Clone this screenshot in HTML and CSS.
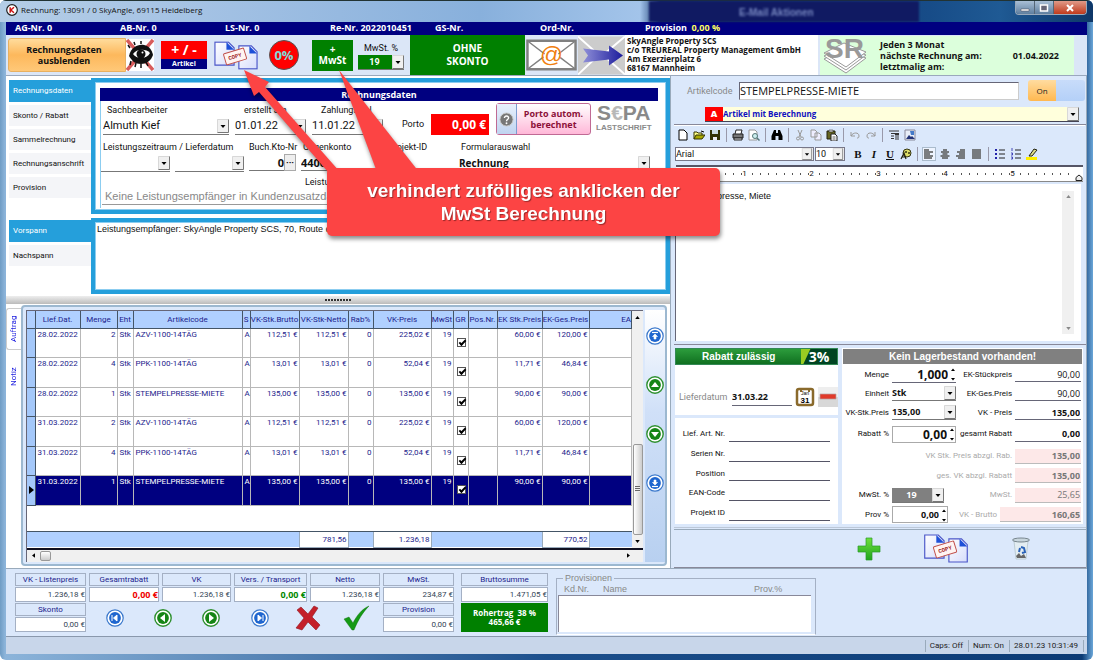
FILE: index.html
```html
<!DOCTYPE html>
<html lang="de">
<head>
<meta charset="utf-8">
<title>Rechnung: 13091 / 0 SkyAngle, 69115 Heidelberg</title>
<link rel="stylesheet" href="styles.css">
</head>
<body>
<svg class="defs" width="0" height="0" aria-hidden="true">
  <defs>
    <linearGradient id="pageFold" x1="0" y1="0" x2="1" y2="1"><stop offset="0" stop-color="#fff"/><stop offset="1" stop-color="#d5dcfb"/></linearGradient>
    <linearGradient id="plusGreen" x1="0" y1="0" x2="0" y2="1"><stop offset="0" stop-color="#6fe03c"/><stop offset="1" stop-color="#1fa41f"/></linearGradient>
    <linearGradient id="arrowBlue" x1="0" y1="0" x2="1" y2="0"><stop offset="0" stop-color="#8f8fd8"/><stop offset="1" stop-color="#1c1c9c"/></linearGradient>
    <symbol id="down" viewBox="0 0 12 14"><path d="M0 0h12v14H0z" fill="#f0f0f0"/><path d="M.5 13.500V.5h11" fill="none" stroke="#d8d8d8"/><path d="M11.500 .5v13H.5" fill="none" stroke="#777"/><path d="M3.500 6h5L6 9z"/></symbol>
    <symbol id="copy" viewBox="0 0 46 30">
      <path d="M1 1h14l6 6v18H1z" fill="url(#pageFold)" stroke="#4a55c8" stroke-width="1.200"/><path d="M13 1l8 8h-8z" fill="#1e50d8"/>
      <path d="M26 5h13l6 6v18H26z" fill="url(#pageFold)" stroke="#4a55c8" stroke-width="1.200"/><path d="M37 5l8 8h-8z" fill="#1e50d8"/>
      <g transform="rotate(-17 22 16)"><rect x="11" y="10" width="22" height="12" rx="1" fill="#fff4f2" stroke="#c0504a"/><text x="22" y="18" text-anchor="middle" font-family="Liberation Mono" font-size="6" font-weight="bold" fill="#a32a2a">COPY</text></g>
    </symbol>
    <symbol id="ringBlue" viewBox="0 0 18 18"><circle cx="9" cy="9" r="8.200" fill="#fff" stroke="#3a78cc" stroke-width="1.200"/><circle cx="9" cy="9" r="5.900" fill="#1f66cf"/></symbol>
    <symbol id="ringGreen" viewBox="0 0 18 18"><circle cx="9" cy="9" r="8.200" fill="#fff" stroke="#2f9030" stroke-width="1.400"/><circle cx="9" cy="9" r="5.900" fill="#158515"/></symbol>
    <symbol id="spin" viewBox="0 0 6 14"><path d="M1 4l2-2.500L5 4zM1 11l2 2.500L5 11z"/></symbol>
  </defs>
</svg>

<div class="window">
  <header class="titlebar">
    <svg class="app-icon" viewBox="0 0 12 12"><circle cx="6" cy="6" r="5.300" fill="#fff" stroke="#222" stroke-width="1.200"/><path d="M4.200 3.200v5.600M8 3.200L4.800 6 8 8.800" fill="none" stroke="#c11" stroke-width="1.500"/></svg>
    <h1>Rechnung: 13091 / 0 SkyAngle, 69115 Heidelberg</h1>
    <div class="behind"><span>E-Mail Aktionen</span></div>
    <div class="caption-buttons">
      <button class="cap" aria-label="Minimieren"><svg viewBox="0 0 10 8"><path d="M1 5h8v2H1z" fill="#fff" stroke="#445" stroke-width=".5"/></svg></button>
      <button class="cap" aria-label="Maximieren"><svg viewBox="0 0 10 8"><path d="M1.500 1h7v6h-7z" fill="#667" stroke="#fff" stroke-width="1.500"/></svg></button>
      <button class="cap close" aria-label="Schließen"><svg viewBox="0 0 10 8"><path d="M2 1l6 6M8 1L2 7" stroke="#fff" stroke-width="2"/></svg></button>
    </div>
  </header>

  <div class="numbers">
    <span>AG-Nr. 0</span><span>AB-Nr. 0</span><span>LS-Nr. 0</span><span>Re-Nr. 2022010451</span><span>GS-Nr.</span><span>Ord-Nr.</span><span>Provision &nbsp;<em>0,00 %</em></span>
  </div>

  <div class="toolbar">
    <button class="hide-btn">Rechnungsdaten<br>ausblenden</button>
    <button class="eye" aria-label="Ausblenden"><svg viewBox="0 0 28 32"><path d="M0 0h28v32H0z" fill="#fff"/><path d="M1 1l26 30M27 1L1 31" stroke="#d85c5c" stroke-width="3.500"/><path d="M3 17C5 8 12 5 18 6c5 1 8 5 9 10-2 6-7 9-12 9C9 25 6 22 3 17z" fill="#111"/><path d="M7 15c3-5 13-6 17-1-3 6-13 7-17 1z" fill="#fff"/><circle cx="15" cy="15" r="4.500" fill="#111"/><circle cx="16.500" cy="13.500" r="1" fill="#fff"/><path d="M5 22l-1 4M10 24l-1 4M15 25v4M20 23l2 4M4 9L2 6M9 6L8 3M15 5V2" stroke="#111" stroke-width="1.500"/></svg></button>
    <button class="plusminus"><b>+ / -</b><small>Artikel</small></button>
    <button class="copy-btn" aria-label="Kopieren"><svg viewBox="0 0 46 30"><use href="#copy"/></svg></button>
    <button class="zero">0%</button>
    <button class="vat-btn">+<br>MwSt</button>
    <div class="vat"><label for="vatTop">MwSt. %</label><span class="combo"><select id="vatTop" class="greensel"><option>19</option></select><svg><use href="#down"/></svg></span></div>
    <button class="noskonto">OHNE<br>SKONTO</button>
    <button class="mail" aria-label="E-Mail"><svg viewBox="0 0 52 32"><path d="M1.500 1.500h49v29h-49z" fill="#fff" stroke="#808080" stroke-width="2.500"/><path d="M2 2l17 13M50 2L33 15M2 30l16-12M50 30L34 18" stroke="#808080" stroke-width="1.500"/><text x="26" y="23" text-anchor="middle" font-family="Liberation Sans" font-size="23" fill="#f08010">@</text></svg></button>
    <div class="fade-mail"><svg viewBox="0 0 47 38"><path d="M0 0h47v38H0z" fill="#ccc"/><path d="M0 0l18 16M47 0L28 16M0 38l17-16M47 38L29 22" stroke="#fff" stroke-width="2"/><path d="M5 12l26 3v-6l14 10-14 10v-6L5 26l5-7z" fill="url(#arrowBlue)"/></svg></div>
    <address>SkyAngle Property SCS<br>c/o TREUREAL Property Management GmbH<br>Am Exerzierplatz 6<br>68167 Mannheim</address>
    <div class="series">
      <svg class="sr" viewBox="0 0 46 38"><path d="M2 23l20-10 22 9-20 15z" fill="#fff" stroke="#999"/><path d="M2 20l20-10 22 9-20 15z" fill="#fff" stroke="#999"/><path d="M2 17l20-10 22 9-20 15z" fill="#fff" stroke="#999"/><text x="3" y="22" font-family="Liberation Sans" font-weight="bold" font-size="28" fill="#999">SR</text></svg>
      <p>Jeden 3 Monat<br>nächste Rechnung am:<br>letztmalig am:</p>
      <time>01.04.2022</time>
    </div>
  </div>

  <main class="main">
    <section class="left">
      <div class="tabs-area">
        <nav class="side-tabs"><button class="on">Rechnungsdaten</button><button>Skonto / Rabatt</button><button>Sammelrechnung</button><button>Rechnungsanschrift</button><button>Provision</button></nav>
        <div class="bluebox form">
          <h2>Rechnungsdaten</h2>
          <div class="row r1">
            <div class="f sach"><label for="sach">Sachbearbeiter</label><span class="combo"><select id="sach"><option>Almuth Kief</option></select><svg><use href="#down"/></svg></span></div>
            <div class="f dat"><label for="erst">erstellt am</label><span class="combo"><select id="erst"><option>01.01.22</option></select><svg><use href="#down"/></svg></span></div>
            <div class="f dat"><label for="zahl">Zahlungsziel</label><span class="combo"><select id="zahl"><option>11.01.22</option></select><svg><use href="#down"/></svg></span></div>
            <label class="porto-l" for="porto">Porto</label><input id="porto" class="porto" value="0,00 €">
            <button class="porto-btn"><span class="q"><svg viewBox="0 0 16 16"><circle cx="8" cy="8" r="7" fill="#777" stroke="#ccc"/><path d="M5.800 6.400c0-3 4.600-2.800 4.400 0C10.100 8 8 8 8 9.800" fill="none" stroke="#fff" stroke-width="1.500"/><circle cx="8" cy="12" r="1" fill="#fff"/></svg></span><span>Porto autom.<br>berechnet</span></button>
            <div class="sepa"><b>S<i>€</i>PA</b><small>LASTSCHRIFT</small></div>
          </div>
          <div class="row r2">
            <div class="f leist"><label for="lz1">Leistungszeitraum / Lieferdatum</label><div class="pair"><span class="combo"><select id="lz1"><option></option></select><svg><use href="#down"/></svg></span><span class="combo"><select aria-label="Lieferdatum bis"><option></option></select><svg><use href="#down"/></svg></span></div></div>
            <div class="f kto"><label for="kto">Buch.Kto-Nr</label><div class="ktof"><input id="kto" value="0"><button>···</button></div></div>
            <div class="f geg"><label for="geg">Gegenkonto</label><input id="geg" value="4400"></div>
            <div class="f proj"><label for="proj">Projekt-ID</label><input id="proj" value=""></div>
            <div class="f formsel"><label for="formsel">Formularauswahl</label><span class="combo"><select id="formsel"><option>Rechnung</option></select><svg><use href="#down"/></svg></span></div>
          </div>
          <div class="row r3"><label for="empf">Leistungsempfänger</label><input id="empf" value="Keine Leistungsempfänger in Kundenzusatzdaten"></div>
        </div>
      </div>
      <div class="tabs-area second">
        <nav class="side-tabs"><button class="on">Vorspann</button><button>Nachspann</button></nav>
        <div class="bluebox"><textarea aria-label="Vorspann">Leistungsempfänger: SkyAngle Property SCS, 70, Route d'Esch</textarea></div>
      </div>
      <div class="splitter"><i></i></div>

      <div class="order">
        <nav class="vtabs"><button class="on">Auftrag</button><button>Notiz</button></nav>
        <div class="grid-panel">
          <div class="grid-wrap">
            <div class="grid-view">
              <table>
                <colgroup><col class="c0"><col class="c1"><col class="c2"><col class="c3"><col class="c4"><col class="c5"><col class="c6"><col class="c6"><col class="c8"><col class="c9"><col class="c10"><col class="c11"><col class="c12"><col class="c13"><col class="c14"><col></colgroup>
                <thead><tr><th></th><th>Lief.Dat.</th><th>Menge</th><th>Eht</th><th>Artikelcode</th><th>S</th><th>VK-Stk.Brutto</th><th>VK-Stk-Netto</th><th>Rab%</th><th>VK-Preis</th><th>MwSt</th><th>GR</th><th>Pos.Nr.</th><th>EK Stk.Preis</th><th>EK-Ges.Preis</th><th class="last">EA</th></tr></thead>
                <tbody>
                  <tr><th></th><td>28.02.2022</td><td class="n">2</td><td>Stk</td><td>AZV-1100-14TÄG</td><td>A</td><td class="n">112,51 €</td><td class="n">112,51 €</td><td class="n">0</td><td class="n">225,02 €</td><td class="n">19</td><td class="ck"><input type="checkbox" checked aria-label="GR"></td><td></td><td class="n">60,00 €</td><td class="n">120,00 €</td><td></td></tr>
                  <tr><th></th><td>28.02.2022</td><td class="n">4</td><td>Stk</td><td>PPK-1100-14TÄG</td><td>A</td><td class="n">13,01 €</td><td class="n">13,01 €</td><td class="n">0</td><td class="n">52,04 €</td><td class="n">19</td><td class="ck"><input type="checkbox" checked aria-label="GR"></td><td></td><td class="n">11,71 €</td><td class="n">46,84 €</td><td></td></tr>
                  <tr><th></th><td>28.02.2022</td><td class="n">1</td><td>Stk</td><td>STEMPELPRESSE-MIETE</td><td>A</td><td class="n">135,00 €</td><td class="n">135,00 €</td><td class="n">0</td><td class="n">135,00 €</td><td class="n">19</td><td class="ck"><input type="checkbox" checked aria-label="GR"></td><td></td><td class="n">90,00 €</td><td class="n">90,00 €</td><td></td></tr>
                  <tr><th></th><td>31.03.2022</td><td class="n">2</td><td>Stk</td><td>AZV-1100-14TÄG</td><td>A</td><td class="n">112,51 €</td><td class="n">112,51 €</td><td class="n">0</td><td class="n">225,02 €</td><td class="n">19</td><td class="ck"><input type="checkbox" checked aria-label="GR"></td><td></td><td class="n">60,00 €</td><td class="n">120,00 €</td><td></td></tr>
                  <tr><th></th><td>31.03.2022</td><td class="n">4</td><td>Stk</td><td>PPK-1100-14TÄG</td><td>A</td><td class="n">13,01 €</td><td class="n">13,01 €</td><td class="n">0</td><td class="n">52,04 €</td><td class="n">19</td><td class="ck"><input type="checkbox" checked aria-label="GR"></td><td></td><td class="n">11,71 €</td><td class="n">46,84 €</td><td></td></tr>
                  <tr class="sel"><th><svg viewBox="0 0 5 8"><path d="M0 0l5 4-5 4z"/></svg></th><td>31.03.2022</td><td class="n">1</td><td>Stk</td><td>STEMPELPRESSE-MIETE</td><td>A</td><td class="n">135,00 €</td><td class="n">135,00 €</td><td class="n">0</td><td class="n">135,00 €</td><td class="n">19</td><td class="ck"><input type="checkbox" checked aria-label="GR"></td><td></td><td class="n">90,00 €</td><td class="n">90,00 €</td><td></td></tr>
                </tbody>
                <tfoot>
                  <tr class="blank"><td colspan="16"></td></tr>
                  <tr class="sum"><td colspan="7"></td><td class="n box">781,56</td><td></td><td class="n box">1.236,18</td><td colspan="4"></td><td class="n box">770,52</td><td></td></tr>
                </tfoot>
              </table>
              <div class="vscroll"><svg viewBox="0 0 6 4"><path d="M0 4l3-4 3 4z"/></svg><span class="gap"></span><i></i><svg viewBox="0 0 6 4"><path d="M0 0l3 4 3-4z"/></svg></div>
            </div>
            <div class="hscroll"><svg viewBox="0 0 4 6"><path d="M4 0L0 3l4 3z"/></svg><i></i><svg class="r" viewBox="0 0 4 6"><path d="M0 0l4 3-4 3z"/></svg></div>
          </div>
          <nav class="vnav">
            <button aria-label="Erster"><svg viewBox="0 0 18 18"><use href="#ringBlue"/><path d="M6 5.500h6" stroke="#fff" stroke-width="1.200"/><path d="M9 7l2.500 2.500H10V12H8V9.500H6.500z" fill="#fff" stroke="#fff" stroke-width=".6"/></svg></button>
            <button aria-label="Zurück"><svg viewBox="0 0 18 18"><use href="#ringGreen"/><path d="M9 6l4 5H5z" fill="#fff"/></svg></button>
            <button aria-label="Weiter"><svg viewBox="0 0 18 18"><use href="#ringGreen"/><path d="M9 12L5 7h8z" fill="#fff"/></svg></button>
            <button aria-label="Letzter"><svg viewBox="0 0 18 18"><use href="#ringBlue"/><path d="M6 12.500h6" stroke="#fff" stroke-width="1.200"/><path d="M9 11l2.500-2.500H10V6H8v2.500H6.500z" fill="#fff" stroke="#fff" stroke-width=".6"/></svg></button>
          </nav>
        </div>
      </div>
    </section>

    <section class="right">
      <div class="article">
        <div class="a1"><label for="art">Artikelcode</label><input id="art" value="STEMPELPRESSE-MIETE"><button class="toggle"><b>On</b><i></i></button></div>
        <div class="a2"><b>A</b><span class="combo"><select aria-label="Artikelart"><option>Artikel mit Berechnung</option></select><svg><use href="#down"/></svg></span></div>
      </div>
      <div class="ed-bar">
        <button aria-label="Neu"><svg viewBox="0 0 12 12"><path d="M2 1h5l3 3v7H2z" fill="#fff" stroke="#000"/></svg></button>
        <button aria-label="Öffnen"><svg viewBox="0 0 12 12"><path d="M1 10V3h3l1 1h4v2" fill="#ff8" stroke="#330"/><path d="M1 10l2-4h9l-3 4z" fill="#aa0" stroke="#330"/><path d="M8 2l3 1" stroke="#000"/></svg></button>
        <button aria-label="Speichern"><svg viewBox="0 0 12 12"><path d="M1 1h10v10H1z" fill="#330"/><path d="M3 1h6v4H3z" fill="#cdd"/><path d="M4 8h4v3H4z" fill="#eee"/></svg></button>
        <span class="sep"></span>
        <button aria-label="Drucken"><svg viewBox="0 0 12 12"><path d="M3 5l1-4h6L9 5" fill="#fff" stroke="#222"/><path d="M1 5h10v4H1z" fill="#777" stroke="#222"/><path d="M2 9h8v2H2z" fill="#ddd" stroke="#222"/></svg></button>
        <button aria-label="Vorschau"><svg viewBox="0 0 12 12"><path d="M1 1h6l2 2v8H1z" fill="#fff" stroke="#999"/><circle cx="7" cy="7" r="2.500" fill="#cee" stroke="#577"/><path d="M9 9l2.500 2.500" stroke="#577" stroke-width="1.500"/></svg></button>
        <span class="sep"></span>
        <button aria-label="Suchen"><svg viewBox="0 0 12 12"><path d="M3 1h2v3h2V1h2l2.500 6v4H7.500V7h-3v4H.5V7z"/></svg></button>
        <span class="sep"></span>
        <button aria-label="Ausschneiden"><svg viewBox="0 0 12 12"><path d="M4 1l3 7M8 1L5 8" stroke="#999"/><circle cx="4" cy="9.500" r="1.500" fill="none" stroke="#999"/><circle cx="8" cy="9.500" r="1.500" fill="none" stroke="#999"/></svg></button>
        <button aria-label="Kopieren"><svg viewBox="0 0 12 12"><path d="M1 1h4l2 2v5H1zM5 4h4l2 2v5H5z" fill="#eef" stroke="#999"/></svg></button>
        <button aria-label="Einfügen"><svg viewBox="0 0 12 12"><path d="M1 2h8v8H1z" fill="#662" stroke="#221"/><path d="M3 1h4v2H3z" fill="#ccc" stroke="#222" stroke-width=".5"/><path d="M5 5h4l2 2v5H5z" fill="#fff" stroke="#222"/><path d="M6.500 8h3M6.500 10h3" stroke="#222" stroke-width=".7"/></svg></button>
        <span class="sep"></span>
        <button aria-label="Rückgängig"><svg viewBox="0 0 12 12"><path d="M2 3v4h4M2 7c2-4 8-4 8 0 0 2-1 2-2 2" fill="none" stroke="#999"/></svg></button>
        <button aria-label="Wiederholen"><svg viewBox="0 0 12 12"><path d="M10 3v4H6M10 7C8 3 2 3 2 7c0 2 1 2 2 2" fill="none" stroke="#999"/></svg></button>
        <span class="sep"></span>
        <button aria-label="Absatz"><svg viewBox="0 0 12 12"><path d="M1 2h10M3 4.500h4M3 7h3M3 9.500h3M10 4v7M8 4v7" stroke="#333"/><path d="M6.500 4h4.500v2H7z" fill="#333"/></svg></button>
        <button aria-label="Bild"><svg viewBox="0 0 12 12"><path d="M1 1h10v10H1z" fill="#e8eef8" stroke="#889"/><path d="M2 10l3-4 2 2 1-1 3 3z" fill="#237"/><path d="M6 2h4v4H7z" fill="#447ac8"/></svg></button>
      </div>
      <div class="ed-bar fmt">
        <span class="combo fname"><select aria-label="Schriftart"><option>Arial</option></select><svg><use href="#down"/></svg></span>
        <span class="combo fsize"><select aria-label="Schriftgröße"><option>10</option></select><svg><use href="#down"/></svg></span>
        <button class="tb">B</button><button class="tb"><i>I</i></button><button class="tb"><u>U</u></button>
        <button aria-label="Farbe"><svg viewBox="0 0 12 12"><circle cx="7" cy="5" r="4" fill="#dd6" stroke="#331"/><circle cx="6" cy="4" r="1" fill="#331"/><circle cx="9" cy="5" r="1" fill="#331"/><path d="M1 11l3-6 2 6M2 9h3" stroke="#221" fill="none" stroke-width="1.200"/></svg></button>
        <span class="sep"></span>
        <button class="pressed" aria-label="Links"><svg viewBox="0 0 12 12"><path d="M1 2h5M1 4h9M1 6h6M1 8h9M1 10h8" stroke="#555" stroke-width="1.300"/></svg></button>
        <button aria-label="Zentriert"><svg viewBox="0 0 12 12"><path d="M4 2h4M2 4h8M3.500 6h5M1.500 8h9M3 10h6" stroke="#555" stroke-width="1.300"/></svg></button>
        <button aria-label="Rechts"><svg viewBox="0 0 12 12"><path d="M5 2h5M2 4h8M4 6h6M1 8h9M3 10h7" stroke="#555" stroke-width="1.300"/></svg></button>
        <button aria-label="Block"><svg viewBox="0 0 12 12"><path d="M1 2h9M1 4h9M1 6h9M1 8h9M1 10h9" stroke="#555" stroke-width="1.300"/></svg></button>
        <span class="sep"></span>
        <button aria-label="Liste"><svg viewBox="0 0 12 12"><path d="M1 1h2v2H1zM1 5h2v2H1zM1 9h2v2H1z" fill="#22a"/><path d="M5 2h6M5 6h6M5 10h6" stroke="#222"/></svg></button>
        <button aria-label="Nummerierung"><svg viewBox="0 0 12 12"><path d="M2 0v3M1 5h1.500v2H1M1 9h1.500v2H1" stroke="#22a" stroke-width=".8" fill="none"/><path d="M5 2h6M5 6h6M5 10h6" stroke="#222"/></svg></button>
        <button aria-label="Markieren"><svg viewBox="0 0 12 12"><path d="M0 9h11v3H0z" fill="#fe0"/><path d="M3 8l5-7 3 1-5 6z" fill="#dd8" stroke="#221"/></svg></button>
      </div>
      <div class="ruler"><i></i><span>1</span><i></i><span>2</span><i></i><span>3</span><i></i><span>4</span><i></i><span>5</span><i class="endr"></i><svg viewBox="0 0 8 7"><path d="M1 6.500V3.500L4 1l3 2.500v3z" fill="#eee" stroke="#222"/></svg></div>
      <div class="editor"><textarea aria-label="Artikeltext">Stempelpresse, Miete</textarea><div class="escroll"><svg viewBox="0 0 6 4"><path d="M0 4l3-4 3 4z"/></svg><svg viewBox="0 0 6 4"><path d="M0 0l3 4 3-4z"/></svg></div></div>

      <div class="details">
        <div class="dl">
          <div class="card1">
            <div class="rabatt"><span>Rabatt zulässig</span><b>3%</b></div>
            <div class="ldat"><label for="ld">Lieferdatum</label><input id="ld" value="31.03.22"><button class="ic" aria-label="Kalender"><svg viewBox="0 0 20 20"><rect x="2" y="2" width="16" height="16" rx="2" fill="#fff" stroke="#8a6a2c" stroke-width="2.500"/><path d="M6 1v4M14 1v4" stroke="#8a6a2c" stroke-width="2"/><text x="10" y="8" font-size="5" text-anchor="middle" font-family="Liberation Sans">Jan</text><text x="10" y="16" font-size="8" font-weight="bold" text-anchor="middle" font-family="Liberation Sans">31</text></svg></button><button class="ic" aria-label="Löschen"><svg viewBox="0 0 20 20"><path d="M0 0h20v20H0z" fill="#eee"/><path d="M0 10h20v10H0z" fill="#d8d8d8"/><path d="M2 7h16v5H2z" fill="#e03a2a" stroke="#b8a0a0" stroke-width=".7"/></svg></button></div>
          </div>
          <div class="card2">
            <label for="d1">Lief. Art. Nr.</label><input id="d1"><label for="d2">Serien Nr.</label><input id="d2"><label for="d3">Position</label><input id="d3"><label for="d4">EAN-Code</label><input id="d4"><label for="d5">Projekt ID</label><input id="d5">
          </div>
        </div>
        <div class="dr">
          <div class="stock">Kein Lagerbestand vorhanden!</div>
          <div class="calc">
            <label for="m">Menge</label><span class="sp"><input id="m" class="big" value="1,000"><svg><use href="#spin"/></svg></span><label for="e1">EK-Stückpreis</label><input id="e1" value="90,00">
            <label for="eh">Einheit</label><span class="combo"><select id="eh"><option>Stk</option></select><svg><use href="#down"/></svg></span><label for="e2">EK-Ges.Preis</label><input id="e2" value="90,00">
            <label for="vs">VK-Stk.Preis</label><span class="combo"><select id="vs"><option>135,00</option></select><svg><use href="#down"/></svg></span><label for="e3">VK - Preis</label><input id="e3" class="b" value="135,00">
            <label for="rb">Rabatt %</label><span class="sp framed"><input id="rb" class="big" value="0,00"><svg><use href="#spin"/></svg></span><label for="e4">gesamt Rabatt</label><input id="e4" class="b" value="0,00">
            <label class="dim wide" for="e5">VK Stk. Preis abzgl. Rab.</label><input id="e5" class="b pink" value="135,00">
            <label class="dim wide" for="e6">ges. VK abzgl. Rabatt</label><input id="e6" class="b pink" value="135,00">
            <label for="mw">MwSt. %</label><span class="combo grey"><select id="mw"><option>19</option></select><svg><use href="#down"/></svg></span><label class="dim" for="e7">MwSt.</label><input id="e7" class="pink" value="25,65">
            <label for="pv">Prov %</label><span class="sp framed prov"><input id="pv" value="0,00"><svg><use href="#spin"/></svg></span><label class="dim brl" for="e8">VK - Brutto</label><input id="e8" class="b pink br" value="160,65">
          </div>
        </div>
      </div>
      <div class="actions">
        <button aria-label="Hinzufügen"><svg width="24" height="24" viewBox="0 0 24 24"><path d="M9 1h6v8h8v6h-8v8H9v-8H1V9h8z" fill="url(#plusGreen)" stroke="#2a9a2a" stroke-width=".7"/></svg></button>
        <button aria-label="Kopieren"><svg width="46" height="29" viewBox="0 0 46 30"><use href="#copy"/></svg></button>
        <button aria-label="Papierkorb"><svg width="20" height="24" viewBox="0 0 20 24"><path d="M3 4l2 18h10l2-18z" fill="#e3edf2" stroke="#b4c4cc" stroke-width=".8"/><ellipse cx="10" cy="3" rx="8.500" ry="2" fill="#c8d6de" stroke="#78868e"/><path d="M10 10l3 1 1 4-3 1M9 11l-1 4" stroke="#2a62b8" stroke-width="2" fill="none"/><path d="M5 19l3-3 2 3 3-2 2 4H6z" fill="#666"/></svg></button>
      </div>
    </section>
  </main>

  <footer class="totals">
    <div class="sums">
      <div class="t"><label for="s1">VK - Listenpreis</label><input id="s1" value="1.236,18 €"></div>
      <div class="t"><label for="s2">Gesamtrabatt</label><input id="s2" class="red" value="0,00 €"></div>
      <div class="t"><label for="s3">VK</label><input id="s3" value="1.236,18 €"></div>
      <div class="t"><label for="s4">Vers. / Transport</label><input id="s4" class="grn" value="0,00 €"></div>
      <div class="t"><label for="s5">Netto</label><input id="s5" value="1.236,18 €"></div>
      <div class="t"><label for="s6">MwSt.</label><input id="s6" value="234,87 €"></div>
      <div class="t brutto"><label for="s7">Bruttosumme</label><input id="s7" value="1.471,05 €"></div>
      <div class="t"><label for="s8">Skonto</label><input id="s8" value="0,00 €"></div>
      <nav class="hnav">
        <button aria-label="Erster"><svg viewBox="0 0 18 18"><use href="#ringBlue"/><path d="M6 6v6M7.500 9L11 6v6z" fill="#fff" stroke="#fff"/></svg></button>
        <button aria-label="Zurück"><svg viewBox="0 0 18 18"><use href="#ringGreen"/><path d="M6 9l5-4v8z" fill="#fff"/></svg></button>
        <button aria-label="Weiter"><svg viewBox="0 0 18 18"><use href="#ringGreen"/><path d="M12 9L7 5v8z" fill="#fff"/></svg></button>
        <button aria-label="Letzter"><svg viewBox="0 0 18 18"><use href="#ringBlue"/><path d="M12 6v6M10.500 9L7 6v6z" fill="#fff" stroke="#fff"/></svg></button>
        <button class="lg" aria-label="Abbrechen"><svg viewBox="0 0 26 26"><path d="M2 5l4-3 7 7 6-8 4 2-6 9 8 8-4 5-8-8-6 8-6-2 8-10z" fill="#c4202a" stroke="#8e1420" stroke-width=".6"/></svg></button>
        <button class="lg" aria-label="Speichern"><svg viewBox="0 0 26 26"><path d="M1 14l5-2 4 6C14 10 19 4 26 1 20 7 15 15 11 25H9z" fill="#159a15" stroke="#0c6c0c" stroke-width=".4"/></svg></button>
      </nav>
      <div class="t"><label for="s9">Provision</label><input id="s9" value="0,00 €"></div>
      <div class="rohertrag">Rohertrag&nbsp; 38 %<br>465,66 €</div>
    </div>
    <fieldset><legend>Provisionen</legend><div class="ph"><span>Kd.Nr.</span><span>Name</span><span>Prov.%</span></div><div class="plist"></div></fieldset>
  </footer>
  <div class="status"><span>Caps: Off</span><span>Num: On</span><span>28.01.23 10:31:49</span></div>
</div>

<aside class="callout">
  <svg viewBox="0 0 480 110"><path d="M4 2L29 14 25 19 100 104H88L19 24 14 28z"/><path d="M99 2l80 102h-42z"/></svg>
  <p>verhindert zufölliges anklicken der<br>MwSt Berechnung</p>
</aside>
</body>
</html>
```
FILE: styles.css
```css
:root {
  --ui: "Roboto", sans-serif;
  --uib: "Open Sans", sans-serif;
  --sans: "Liberation Sans", sans-serif;
  --navy: #000080;
  --panel: #dbe8fb;
  --blue: #259fdb;
}
* { box-sizing: border-box; }
body { margin: 0; font: 9px/12px var(--ui); color: #111; }
button, input, select, textarea { font: inherit; color: inherit; margin: 0; padding: 0; border: 0; border-radius: 0; background: none; min-width: 0; appearance: none; outline: 0; }
button { flex: none; }
svg { display: block; }
.defs { position: absolute; }

.window { min-height: 100vh; display: flex; flex-direction: column; padding: 0 6px 6px; background: linear-gradient(90deg, #6f9cc4 0, #8cb4da 5px, #1c4f8c 50%, #0b3a74 99%, #6aa6d8 100%); border-radius: 6px; overflow: hidden; }
.titlebar { height: 22px; margin: 0 -6px; padding: 0 6px; display: flex; align-items: flex-start; border-top: 1px solid #233; background: linear-gradient(90deg, #b4cde6 0, #a4c2e4 200px, #88b0dc 480px, #a3c4ea 640px, #12326a 660px, #174c88 930px, #1f5a94 1000px, #0e3768 100%); }
.app-icon { width: 12px; height: 12px; margin-top: 3px; }
.titlebar h1 { margin: 3px 0 0 3px; font: 8px/12px var(--uib); white-space: nowrap; }
.behind { flex: 1; display: flex; justify-content: flex-end; padding-right: 96px; }
.behind span { width: 270px; height: 21px; padding-left: 90px; background: #101a62; color: #7888c0; font: bold 10px/24px var(--sans); filter: blur(1px); }
.caption-buttons { display: flex; border: 1px solid #9ab; border-top: 0; border-radius: 0 0 4px 4px; overflow: hidden; }
.cap { width: 19px; height: 13px; background: linear-gradient(#a9bfd6, #5f7f9f); border-right: 1px solid #567; display: grid; place-items: center; }
.cap svg { width: 10px; height: 8px; }
.cap.close { width: 32px; background: linear-gradient(#e09a88, #c03a1c); border-right: 0; }

.numbers { height: 13px; padding-left: 9px; display: grid; grid-template-columns: repeat(6, 105px) 1fr; background: var(--navy); color: #fff; font: bold 9px/12px var(--uib); white-space: nowrap; }
.numbers em { font-style: normal; color: #ffff60; }

.toolbar { height: 41px; display: flex; align-items: center; padding-left: 2px; background: #dbe6f7; border-bottom: 1px solid #9aa8bc; }
.hide-btn { width: 118px; height: 34px; padding-right: 6px; border-radius: 3px 0 0 3px; border: 1px solid #e8b060; background: linear-gradient(#ffdc9c, #fdb85c 50%, #ffc878); font: bold 9px/11px var(--uib); }
.eye svg { width: 28px; height: 32px; }
.plusminus { width: 46px; height: 28px; margin-left: 7px; display: grid; grid-template-rows: 18px 10px; background: var(--navy); color: #fff; }
.plusminus b { background: #f00; font: bold 14px/18px var(--uib); }
.plusminus small { font: bold 7px/10px var(--uib); }
.copy-btn { margin-left: 7px; }
.copy-btn svg { width: 44px; height: 29px; }
.zero { width: 30px; height: 30px; margin-left: 11px; border-radius: 50%; border: 1px solid #555; background: #f00; color: #7ddcdc; font: bold 13px/28px var(--uib); }
.vat-btn { width: 41px; height: 31px; margin-left: 13px; background: #008000; color: #fff; font: bold 10px/11px var(--uib); }
.vat { width: 46px; margin: 0 6px 0 5px; text-align: center; white-space: nowrap; }
.vat label { display: block; line-height: 14px; }
.noskonto { width: 115px; height: 40px; background: #008000; color: #fff; font: bold 10px/13px var(--uib); }
.mail svg { width: 51px; height: 32px; margin: 0 1px; }
.fade-mail svg { width: 47px; height: 39px; }
address { width: 193px; height: 40px; padding: 1px 2px; background: #fff; font: bold 8px/9px var(--uib); white-space: nowrap; }
.series { flex: 1; height: 39px; margin: 0 13px 0 2px; padding: 0 15px 0 2px; display: flex; align-items: center; background: #dcffdc; font: bold 9px/11px var(--uib); white-space: nowrap; }
.series p { margin: 0 auto 0 12px; }
.sr { width: 46px; height: 38px; }

.combo { display: grid; border-bottom: 1px solid #777; }
.combo > * { grid-area: 1 / 1; }
.combo select { width: 100%; height: 14px; padding: 0 13px 0 0; }
.combo svg { width: 12px; height: 14px; justify-self: end; align-self: center; pointer-events: none; }
.greensel { background: linear-gradient(#008000, #008000) 0 0 / 34px 14px no-repeat; color: #fff; font-weight: bold; text-align: center; }

.main { flex: 1; display: grid; grid-template-columns: 665fr 416fr; background: #fff; }
.left { display: flex; flex-direction: column; min-width: 0; border-right: 1px solid #9ab; }
.tabs-area { display: grid; grid-template-columns: 82px 1fr; padding: 2px 0 0 3px; }
.side-tabs { display: flex; flex-direction: column; gap: 3px; padding-top: 2px; font-size: 8px; }
.side-tabs button { height: 21px; padding-left: 4px; text-align: left; background: #f4f5f8; }
.side-tabs .on { background: var(--blue); color: #fff; height: 22px; }
.bluebox { border: 4px solid var(--blue); min-width: 0; background: #fff; outline: 1px solid #8ccdf0; outline-offset: -5px; }
.form { height: 136px; padding: 6px 8px 4px 5px; }
.form h2 { margin: 0; height: 13px; background: var(--navy); color: #fff; text-align: center; font: bold 9px/13px var(--uib); }
.row { display: flex; border-left: 1px solid #8ccdf0; white-space: nowrap; }
.f { display: flex; flex-direction: column; }
.r1 { height: 34px; padding-left: 2px; align-items: flex-end; }
.r1 .f { font-size: 11px; }
.r1 label { font-size: 9px; padding-left: 4px; line-height: 14px; }
.r1 .f label { padding-left: 9px; }
.r1 .f.sach label { padding-left: 4px; }
.r1 .combo select { height: 17px; }
.sach { width: 126px; }
.dat { width: 71px; margin-left: 6px; }
.r1 .porto-l { width: 48px; padding-left: 19px; margin-bottom: 4px; }
.porto { width: 58px; height: 21px; padding-right: 3px; background: #f00; color: #fff; font: bold 12px/20px var(--uib); text-align: right; }
.porto-btn { width: 95px; height: 32px; margin-left: 7px; display: grid; grid-template-columns: 20px 1fr; align-items: center; border: 1px solid #c06a94; border-radius: 3px; background: linear-gradient(#fff, #ffb8d8); color: #8c1038; font: bold 9px/11px var(--uib); }
.q { height: 30px; display: grid; place-items: center; background: linear-gradient(#e8f0fc, #c0d4f0); border-right: 1px solid #7c9cd0; }
.q svg { width: 15px; height: 15px; }
.sepa { margin: 0 0 2px 5px; color: #8a8a8a; display: flex; flex-direction: column; align-items: center; }
.sepa b { font: bold 21px/20px var(--sans); }
.sepa i { font-style: normal; color: #b8b8b8; }
.sepa small { font: bold 8px/10px var(--sans); }
.r2 { height: 40px; padding-top: 5px; gap: 5px; }
.r2 label { line-height: 14px; padding-left: 2px; }
.r2 input, .r2 select, .r2 button { height: 17px; }
.r2 input { border-bottom: 1px solid #777; font: bold 11px/14px var(--uib); }
.leist { width: 143px; }
.pair { display: grid; grid-template-columns: 1fr 1fr; gap: 5px; }
.kto { width: 47px; }
.r2 .kto label { padding: 0; }
.ktof { display: grid; grid-template-columns: 1fr 12px; }
.ktof input { text-align: right; }
.ktof button { background: #eee; border: 1px solid #aaa; line-height: 10px; font-weight: bold; }
.geg { width: 62px; }
.proj { width: 86px; }
.r2 .proj label { padding-left: 20px; }
.formsel { flex: 1; margin-right: 8px; }
.formsel select { font: bold 10px/14px var(--uib); }
.r3 { height: 33px; flex-direction: column; padding-top: 2px; }
.r3 label { padding-left: 204px; line-height: 11px; }
.r3 input { height: 17px; padding-left: 3px; margin: 0 5px 0 1px; border-bottom: 1px solid #999; color: #888; font: 11px/16px var(--sans); }
.second { padding-top: 4px; }
.second .side-tabs { padding-top: 2px; }
.second .bluebox { height: 76px; }
.second textarea { display: block; width: 100%; height: 100%; padding: 1px 2px; resize: none; font: 9px/12px var(--sans); }
.splitter { height: 8px; margin-top: 2px; background: linear-gradient(#eee, #bbb); display: grid; place-items: center; }
.splitter i { width: 26px; height: 2px; background: repeating-linear-gradient(90deg, #333 0 2px, #ddd 2px 3px); }

.order { flex: 1; display: grid; grid-template-columns: 15px 1fr; }
.vtabs { display: flex; flex-direction: column; gap: 8px; padding-top: 4px; }
.vtabs button { writing-mode: vertical-rl; transform: rotate(180deg); width: 15px; height: 38px; color: #2222e0; text-align: center; font-size: 8px; }
.vtabs .on { height: 42px; border: 1px solid #ccc; border-left: 0; border-radius: 0 3px 3px 0; }
.grid-panel { margin: 1px 3px 2px 0; padding: 3px 0 2px 3px; border: 2px solid #9cb8d0; border-radius: 4px; background: var(--panel); display: grid; grid-template-columns: 1fr 22px; }
.grid-wrap { min-width: 0; border: 1px solid #667; border-right: 0; border-bottom: 0; background: #fff; }
.grid-view { display: grid; grid-template-columns: 1fr 11px; overflow: hidden; border-bottom: 2px solid #112; }
table { width: 100%; table-layout: fixed; border-collapse: collapse; font: 8px/11px var(--ui); color: #1c1c8c; white-space: nowrap; }
th, td { padding: 0 2px; border-right: 1px solid #b8b8b8; border-bottom: 1px solid #b8b8b8; vertical-align: top; }
thead th { height: 17px; padding: 0; vertical-align: middle; font-weight: normal; background: #b0d0ff; border-color: #456; }
thead th.last { text-align: right; }
tbody th { padding: 0 0 0 2px; background: #a4c8fa; border-color: #456; vertical-align: middle; }
tbody th svg { width: 5px; height: 8px; }
tbody tr { height: 29px; }
tbody tr:nth-child(even) { height: 30px; }
td.n { text-align: right; padding-right: 1px; }
.sel td { background: var(--navy); color: #fff; }
.ck { padding: 9px 0 0 3px; }
.ck input { display: block; width: 9px; height: 9px; border: 1px solid #555; background: #fff; }
.ck input:checked::after { content: ""; display: block; width: 5px; height: 2px; margin: 1px; border: solid #000; border-width: 0 0 2px 2px; transform: rotate(-45deg); }
.blank td { height: 26px; border-right: 0; border-bottom-color: #456; }
.sum td { height: 16px; background: #b0d0ff; border: 0; vertical-align: middle; }
.sum td.box { background: #fff; border: 1px solid #9ab; }
.c0 { width: 8px; } .c1 { width: 45px; } .c2 { width: 37px; } .c3 { width: 16px; } .c4 { width: 109px; } .c5 { width: 8px; } .c6 { width: 49px; } .c8 { width: 25px; } .c9 { width: 58px; } .c10 { width: 22px; } .c11 { width: 15px; } .c12 { width: 29px; } .c13 { width: 45px; } .c14 { width: 47px; }
.vscroll { display: flex; flex-direction: column; align-items: center; padding: 5px 0; background: #f0f0f0; }
.vscroll svg { width: 5px; height: 3px; }
.vscroll .gap { flex: 128; }
.vscroll i { flex: 90; width: 10px; margin-bottom: 5px; border: 1px solid #999; border-radius: 2px; background: repeating-linear-gradient(#666 0 1px, #eee 1px 2px) center / 5px 6px no-repeat, linear-gradient(90deg, #fff, #ccc); }
.hscroll { display: flex; align-items: center; height: 12px; padding: 0 13px 0 5px; background: #f0f0f0; }
.hscroll svg { width: 3px; height: 5px; }
.hscroll i { width: 11px; height: 10px; margin: 0 auto 0 5px; border: 1px solid #999; border-radius: 2px; background: linear-gradient(#fff, #ccc); }
.vnav { display: flex; flex-direction: column; align-items: center; gap: 31px; padding-top: 17px; background: linear-gradient(#fff, #d0e0f8 40%, #b8d0f0); margin-left: 2px; }
.vnav svg { width: 18px; height: 18px; }

.right { display: flex; flex-direction: column; min-width: 0; background: var(--panel); border-right: 1px solid #9ab; padding-left: 3px; }
.article { height: 49px; border-bottom: 1px solid #889; padding: 3px 1px 0 13px; }
.a1 { display: grid; grid-template-columns: 49px 1fr 57px; column-gap: 3px; align-items: center; height: 23px; color: #888; }
.a1 input { height: 18px; margin-right: 6px; background: #fff; border: 1px solid #667; border-right-color: #ccc; border-bottom-color: #ccc; color: #111; font: 11px/16px var(--uib); }
.toggle { height: 21px; display: grid; grid-template-columns: 28px 1fr; border-radius: 3px; overflow: hidden; color: #222; }
.toggle b { background: linear-gradient(#ffdca0, #ffb850); font: 8px/21px var(--uib); }
.toggle i { background: linear-gradient(#c8dcfa, #b4d0f8); }
.a2 { display: grid; grid-template-columns: 18px 1fr; margin: 5px 6px 0 18px; height: 15px; border-bottom: 1px solid #445; font: bold 8px/14px var(--uib); }
.a2 b { background: #f00; color: #fff; text-align: center; font-size: 9px; }
.a2 .combo { border: 0; }
.a2 select { background: #ffffdc; color: #1010c0; }
.ed-bar { height: 21px; margin-right: 1px; padding: 0 0 2px 3px; display: flex; align-items: center; gap: 4px; border-top: 1px solid #fff; }
.ed-bar svg { width: 12px; height: 12px; }
.sep { width: 1px; height: 14px; background: #99a; margin: 0 1px; }
.fmt { height: 16px; padding: 0 0 0 1px; border: 0; }
.fmt .combo { background: #fff; border: 1px solid #778; height: 14px; font-size: 9px; }
.fmt .combo select, .fmt .combo svg { height: 12px; }
.fname { width: 139px; }
.fsize { width: 30px; margin: 0 3px 0 -3px; }
.tb { width: 12px; font: bold 11px/12px "Liberation Serif", serif; }
.pressed { background: #eef4ff; outline: 1px solid #abc; }
.ruler { height: 17px; margin: 3px 3px 2px 2px; padding-left: 4px; display: flex; align-items: center; background: #fff; border-top: 2px solid #556; border-bottom: 1px solid #888; font-size: 8px; }
.ruler i { flex: none; width: 62px; height: 2px; background: repeating-linear-gradient(90deg, transparent 0 5px, #555 5px 6px, transparent 6px 8px); }
.ruler .endr { flex: 1; }
.ruler span { width: 5px; text-align: center; }
.ruler svg { width: 8px; height: 7px; align-self: flex-end; margin-left: auto; }
.editor { flex: 1; margin: 0 5px 3px 1px; display: grid; grid-template-columns: 1fr 12px; padding: 3px 7px 7px 0; background: #fff; border-left: 1px solid #667; }
.editor textarea { padding: 4px 8px; resize: none; font: 9px/11px var(--sans); }
.escroll { margin-top: 4px; background: #f0f0f0; display: flex; flex-direction: column; justify-content: space-between; align-items: center; padding: 4px 0; }
.escroll svg { width: 5px; height: 3px; fill: #888; }
.details { display: grid; grid-template-columns: 167fr 234fr; column-gap: 4px; padding: 3px 6px 3px 1px; border-top: 1px solid #889; border-bottom: 1px solid #bcc8d8; }
.dl { display: grid; grid-template-rows: 67px 1fr; row-gap: 3px; }
.card1, .card2, .dr { background: #fff; }
.rabatt { height: 17px; display: grid; grid-template-columns: 130fr 37fr; background: linear-gradient(#2c9c3c, #107020); border: 1px solid #385; color: #fff; text-align: center; font: bold 10px/15px var(--sans); }
.rabatt b { background: linear-gradient(115deg, #9c2 8px, #042 9px); font: bold 14px/15px var(--uib); }
.ldat { display: grid; grid-template-columns: 50px 60px 20px 20px; column-gap: 3px; padding: 22px 0 0 4px; align-items: center; color: #888; }
.ldat input { height: 17px; border-bottom: 1px solid #667; color: #111; font: bold 9px/14px var(--uib); }
.ic svg { width: 20px; height: 20px; }
.card2 { padding: 4px 8px 3px 2px; display: grid; grid-template-columns: 48px 1fr; column-gap: 4px; text-align: right; font-size: 8px; white-space: nowrap; grid-auto-rows: 1fr; }
.card2 input { border-bottom: 1px solid #556; }
.card2 label { padding-top: 6px; }
.dr { padding: 1px 1px 0; }
.stock { height: 15px; background: #808080; color: #fff; text-align: center; font: bold 10px/15px var(--sans); }
.calc { display: grid; grid-template-columns: 46px 64px 1fr 66px; grid-template-rows: 19px 19px 19px 24px 20px 19px 20px 19px; column-gap: 3px; align-items: center; padding: 1px 1px 0 0; text-align: right; font-size: 8px; white-space: nowrap; }
.calc > input { height: 15px; border-bottom: 1px solid #667; text-align: right; padding-right: 1px; font: 9px/12px var(--uib); }
.calc input.b { font-weight: bold; }
.calc > input.pink { background: #fde8e8; color: #777; border-color: #bbb; }
.calc > input.br { margin-left: -15px; }
.brl { padding-right: 15px; }
.dim { color: #aaa; }
.wide { grid-column: 1 / 4; }
.sp { display: grid; grid-template-columns: 1fr 6px; column-gap: 2px; align-items: center; border-bottom: 1px solid #667; }
.sp input { text-align: right; height: 15px; font: bold 9px/14px var(--uib); }
.sp input.big { font-size: 12px; }
.sp svg { width: 6px; height: 14px; }
.framed { border: 1px solid #aaa; }
.calc .combo select { font: bold 9px/14px var(--uib); }
.calc .grey select { background: linear-gradient(#808080, #808080) 0 0 / 40px 14px no-repeat; color: #fff; text-align: center; }
.grey { margin-right: 12px; }
.prov { margin-right: 8px; height: 17px; }
.actions { height: 39px; display: flex; justify-content: flex-end; align-items: center; gap: 42px; padding-right: 55px; border-top: 1px solid #9ab; margin-top: 1px; border-bottom: 1px solid #889; }

.totals { height: 68px; display: flex; gap: 8px; padding: 4px 0 0 9px; background: var(--panel); border-top: 1px solid #9ab; color: #1c1c8c; }
.sums { display: grid; grid-template-columns: 71px 70px 69px 73px 70px 71px 91px; grid-template-rows: 29px 29px; gap: 1px 3px; align-content: start; }
.t { display: grid; grid-template-rows: 13px 15px; row-gap: 1px; text-align: center; }
.t label { border: 1px solid #a4b0c4; line-height: 11px; white-space: nowrap; font-size: 8px; }
.t input { width: 100%; background: #fff; border: 1px solid #a4b0c4; text-align: right; font: 8px/12px var(--ui); color: #345; }
.brutto { padding-left: 4px; }
.t .red { color: #e00; font: bold 9px/12px var(--uib); }
.t .grn { color: #080; font: bold 9px/12px var(--uib); }
.hnav { grid-column: 2 / 6; display: grid; grid-template-columns: repeat(6, 1fr); justify-items: center; align-items: center; padding-left: 2px; }
.hnav svg { width: 18px; height: 18px; }
.hnav .lg svg { width: 26px; height: 26px; }
.rohertrag { margin-left: 4px; background: #008000; color: #fff; text-align: center; font: bold 8px/9px var(--uib); padding-top: 5px; }
fieldset { width: 260px; height: 62px; margin: 0; padding: 0 4px 2px 1px; border: 1px solid #a4b0c4; border-bottom-color: #fff; color: #888; font: 9px/11px var(--sans); display: flex; flex-direction: column; }
legend { margin-left: 5px; padding: 0 2px; line-height: 10px; }
.ph { display: grid; grid-template-columns: 39px 151px 1fr; padding-left: 6px; line-height: 12px; }
.plist { flex: 1; background: #fff; border: 1px solid #889; border-right: 0; border-bottom: 0; }
.status { height: 18px; display: flex; justify-content: flex-end; align-items: center; padding-right: 3px; background: #c8d6ea; border-top: 1px solid #8a98ac; font-size: 8px; color: #222; }
.status span { padding: 0 5px 0 4px; border-right: 1px solid #9ab; }
.status span:first-child { border-left: 1px solid #9ab; }

.callout { position: absolute; left: 240px; top: 68px; width: 480px; filter: drop-shadow(1px 3px 2px rgba(0, 0, 0, .45)); }
.callout svg { width: 480px; height: 110px; fill: #fc4444; }
.callout p { margin: -10px 0 0 87px; padding: 11px 0; border-radius: 5px; background: #fc4444; color: #fff; text-align: center; font: bold 19px/23px var(--sans); text-shadow: 1px 1px 1px rgba(0, 0, 0, .4); }
```
